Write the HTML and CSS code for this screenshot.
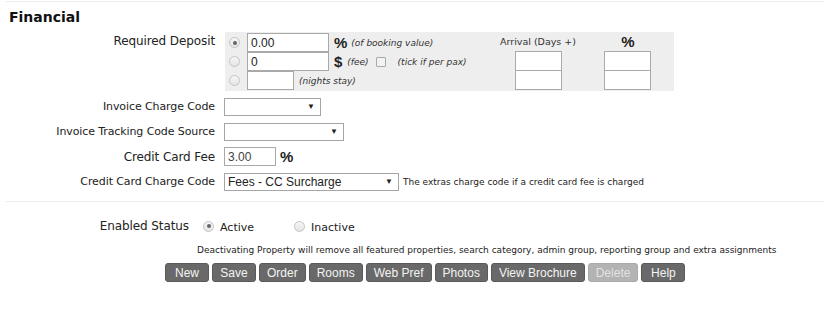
FILE: index.html
```html
<!DOCTYPE html>
<html>
<head>
<meta charset="utf-8">
<link rel="stylesheet" href="styles.css">
</head>
<body>
<div class="page">
  <div class="topline"></div>
  <h2 class="title">Financial</h2>

  <div class="form">
    <div class="row deposit-row">
      <div class="label lbl-lg deposit-label">Required Deposit</div>
      <div class="deposit">
        <div class="dep-left">
          <div class="dep-row">
            <span class="radio checked"></span>
            <span class="input w82">0.00</span>
            <span class="pct">%</span>
            <span class="note">(of booking value)</span>
          </div>
          <div class="dep-row">
            <span class="radio"></span>
            <span class="input w82">0</span>
            <span class="dollar">$</span>
            <span class="note">(fee)</span>
            <span class="check"></span>
            <span class="note">(tick if per pax)</span>
          </div>
          <div class="dep-row">
            <span class="radio"></span>
            <span class="input w47"></span>
            <span class="note">(nights stay)</span>
          </div>
        </div>
        <div class="dep-col arrival">
          <div class="col-head">Arrival (Days +)</div>
          <span class="input w47 stack"></span>
          <span class="input w47 stack second"></span>
        </div>
        <div class="dep-col percent">
          <div class="col-head pct-head">%</div>
          <span class="input w47 stack"></span>
          <span class="input w47 stack second"></span>
        </div>
      </div>
    </div>

    <div class="row">
      <div class="label">Invoice Charge Code</div>
      <div class="ctrl"><span class="select w97"><span class="sel-text"></span><span class="arrow">▼</span></span></div>
    </div>

    <div class="row">
      <div class="label">Invoice Tracking Code Source</div>
      <div class="ctrl"><span class="select w120"><span class="sel-text"></span><span class="arrow">▼</span></span></div>
    </div>

    <div class="row">
      <div class="label lbl-lg">Credit Card Fee</div>
      <div class="ctrl"><span class="input w52 fee">3.00</span><span class="pct pct-fee">%</span></div>
    </div>

    <div class="row">
      <div class="label">Credit Card Charge Code</div>
      <div class="ctrl"><span class="select w175"><span class="sel-text">Fees - CC Surcharge</span><span class="arrow">▼</span></span><span class="hint">The extras charge code if a credit card fee is charged</span></div>
    </div>
  </div>

  <div class="divider"></div>

  <div class="status">
    <div class="label lbl-lg status-label">Enabled Status</div>
    <span class="radio checked"></span><span class="opt">Active</span>
    <span class="radio opt2"></span><span class="opt">Inactive</span>
  </div>

  <p class="warning">Deactivating Property will remove all featured properties, search category, admin group, reporting group and extra assignments</p>

  <div class="buttons">
    <span class="btn">New</span>
    <span class="btn">Save</span>
    <span class="btn">Order</span>
    <span class="btn">Rooms</span>
    <span class="btn">Web Pref</span>
    <span class="btn">Photos</span>
    <span class="btn">View Brochure</span>
    <span class="btn disabled">Delete</span>
    <span class="btn">Help</span>
  </div>
</div>
</body>
</html>
```

FILE: styles.css
```css
* { box-sizing: border-box; }
html, body { margin: 0; padding: 0; background: #fff; }
body {
  font-family: "DejaVu Sans", Verdana, sans-serif;
  color: #222;
  font-size: 11px;
}
.page { width: 824px; height: 330px; position: relative; }
.topline {
  margin-left: 6px;
  height: 2px;
  border-top: 1px solid #ececec;
  margin-top: 1px;
}
.title {
  margin: 5px 0 0 9px;
  font-size: 14px;
  font-weight: bold;
  line-height: 18px;
  color: #111;
}
.form { margin-top: 6px; }
.row {
  display: flex;
  align-items: center;
  height: 25px;
}
.deposit-row { align-items: flex-start; height: 62px; }
.label {
  width: 215px;
  flex: none;
  margin-right: 9px;
  text-align: right;
  font-size: 11px;
  white-space: nowrap;
  color: #222;
  letter-spacing: -0.1px;
}
.lbl-lg { font-size: 12px; }
.deposit-label { padding-top: 2px; }
.ctrl { display: flex; align-items: center; white-space: nowrap; }

.deposit {
  height: 59px;
  width: 449px;
  margin-left: 1px;
  background: #eeeeee;
  display: flex;
  padding-top: 1px;
}
.dep-left { width: 268px; }
.dep-row {
  display: flex;
  align-items: center;
  height: 19px;
  white-space: nowrap;
}
.radio {
  display: inline-block;
  width: 11px;
  height: 11px;
  border-radius: 50%;
  border: 1px solid #c4c4c4;
  background: linear-gradient(#f6f6f6, #e4e4e4);
  position: relative;
  flex: none;
}
.radio.checked::after {
  content: "";
  position: absolute;
  left: 2.5px; top: 2.5px;
  width: 4px; height: 4px;
  border-radius: 50%;
  background: #666;
}
.dep-row .radio { margin: 0 7px 0 4px; }
.input {
  display: inline-flex;
  align-items: center;
  height: 19px;
  border: 1px solid #a9a9a9;
  background: #fff;
  font-family: "Liberation Sans", Arial, sans-serif;
  font-size: 12px;
  color: #222;
  padding-left: 3px;
  flex: none;
}
.w82 { width: 82px; }
.w47 { width: 47px; }
.w52 { width: 52px; }
.pct {
  font-family: "Liberation Sans", Arial, sans-serif;
  font-weight: bold;
  font-size: 15px;
  margin-left: 5px;
  letter-spacing: -1px;
}
.dollar {
  font-family: "Liberation Sans", Arial, sans-serif;
  font-weight: bold;
  font-size: 15px;
  margin-left: 5px;
}
.note {
  font-style: italic;
  font-size: 9px;
  margin-left: 5px;
  color: #333;
}
.check {
  display: inline-block;
  width: 10px;
  height: 10px;
  border: 1px solid #a9a9a9;
  background: #f2f2f2;
  border-radius: 1px;
  margin-left: 7px;
  margin-right: 7px;
}
.dep-col {
  display: flex;
  flex-direction: column;
  align-items: center;
}
.arrival { width: 94px; margin-left: -2px; }
.percent { width: 47px; margin-left: 19px; }
.col-head {
  font-size: 9.5px;
  height: 18px;
  line-height: 18px;
  white-space: nowrap;
  color: #333;
}
.pct-head {
  font-family: "Liberation Sans", Arial, sans-serif;
  font-weight: bold;
  font-size: 15px;
  letter-spacing: -1px;
  color: #222;
}
.stack { height: 20px; }
.stack.second { margin-top: -1px; }

.select {
  display: inline-flex;
  align-items: center;
  justify-content: space-between;
  height: 18px;
  border: 1px solid #a6a6a6;
  background: #fff;
  font-family: "Liberation Sans", Arial, sans-serif;
  font-size: 12px;
  color: #222;
  padding: 0 5px 0 3px;
  white-space: nowrap;
  flex: none;
}
.w97 { width: 97px; }
.w120 { width: 120px; }
.w175 { width: 175px; }
.arrow { font-size: 8px; color: #222; }
.fee { color: #444; }
.pct-fee { margin-left: 4px; }
.hint { font-size: 9px; margin-left: 4px; color: #222; }

.divider {
  margin: 7px 0 0 6px;
  border-top: 1px solid #ececec;
}
.status {
  display: flex;
  align-items: center;
  height: 24px;
  margin-top: 12px;
}
.status-label { width: 189px; margin-right: 14px; }
.opt { font-size: 11px; margin-left: 6px; margin-top: 2px; }
.opt2 { margin-left: 40px; }
.warning {
  margin: 7px 0 0 197px;
  font-size: 9px;
  line-height: 11px;
  color: #222;
  white-space: nowrap;
}
.buttons {
  display: flex;
  gap: 3px;
  margin: 7px 0 0 165px;
}
.btn {
  display: inline-flex;
  align-items: center;
  justify-content: center;
  height: 19px;
  min-width: 44px;
  padding: 0 7px;
  background: #696969;
  color: #f4f4f4;
  border-radius: 3px;
  font-family: "Liberation Sans", Arial, sans-serif;
  font-size: 12px;
  border: 1px solid #5a5a5a;
}
.btn.disabled { background: #b3b3b3; color: #e2e2e2; border-color: #aaa; }
```
